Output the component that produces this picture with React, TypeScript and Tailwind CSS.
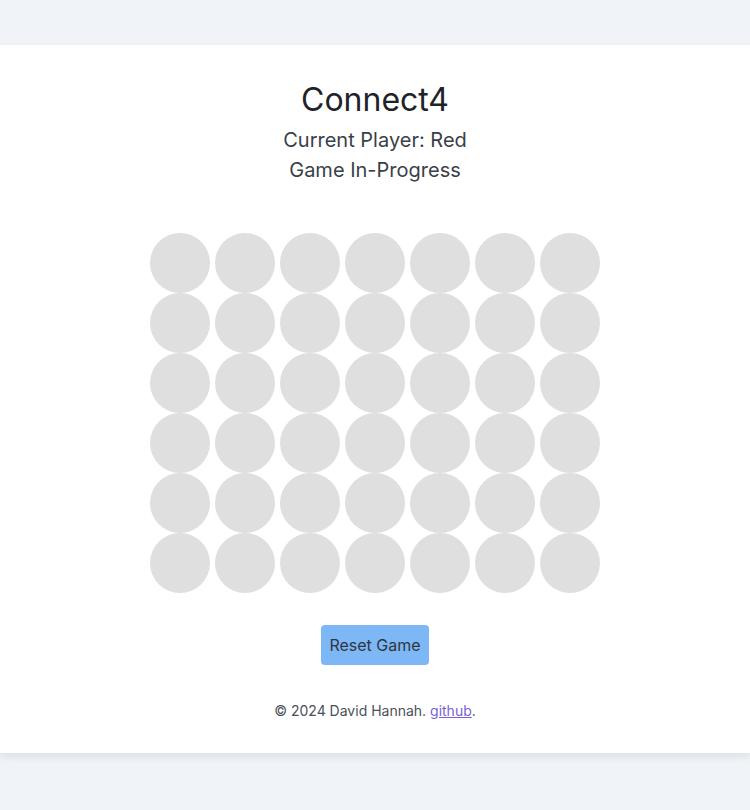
const ROWS = 6;
const COLS = 7;

export default function App() {
  const board = Array.from({ length: ROWS * COLS }, (_, i) => i);

  return (
    <div
      className="min-h-[810px] bg-[#f0f4f8] pt-[45px]"
      style={{ fontFamily: "Inter, 'Noto Sans', sans-serif" }}
    >
      <main className="bg-white pt-[35px] pb-[32px] shadow-[0_4px_8px_rgba(0,0,0,0.08)] flex flex-col items-center">
        <h1 className="text-[32px] leading-10 text-[#1f2229]">Connect4</h1>
        <div className="mt-[5px] text-center text-[20px] leading-[30px] text-[#3a3f47]">
          <p>Current Player: Red</p>
          <p>Game In-Progress</p>
        </div>

        <div className="mt-[48px] grid grid-cols-7 gap-x-[5px]">
          {board.map((i) => (
            <button
              key={i}
              className="w-[60px] h-[60px] rounded-full bg-[#dfdfdf]"
              aria-label={`cell ${i}`}
            />
          ))}
        </div>

        <button className="mt-8 h-10 w-[108px] rounded bg-[#7db7f6] text-base text-[#2f3640]">
          Reset Game
        </button>

        <footer className="mt-[36px] text-sm leading-5 text-[#4b5058]">
          © 2024 David Hannah.{" "}
          <a href="#" className="text-[#7b5fd6] underline">
            github
          </a>
          .
        </footer>
      </main>
    </div>
  );
}
